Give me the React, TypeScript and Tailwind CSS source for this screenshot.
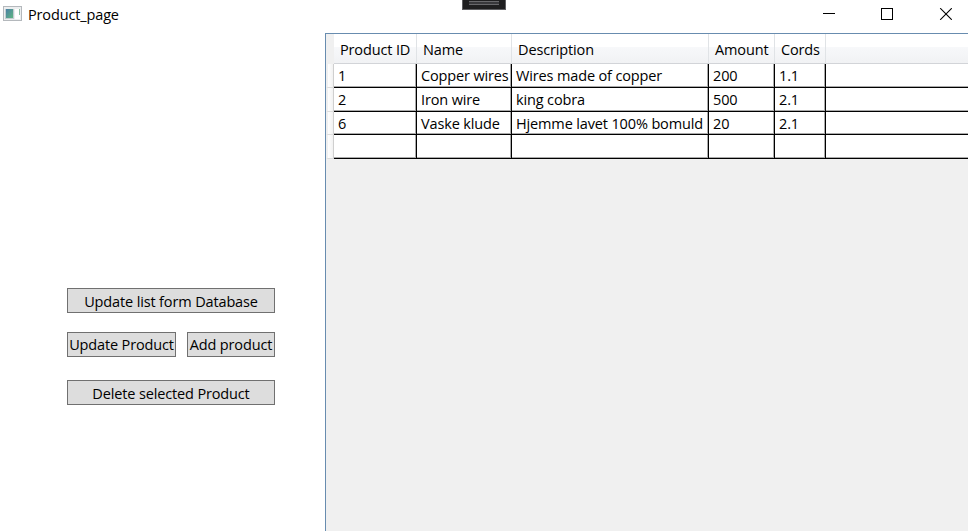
const columns = [
  { title: 'Product ID', width: 'w-[83px]' },
  { title: 'Name', width: 'w-[95px]' },
  { title: 'Description', width: 'w-[197px]' },
  { title: 'Amount', width: 'w-[66px]' },
  { title: 'Cords', width: 'w-[51px]' },
];

const rows = [
  { height: 'h-6', pad: 'pt-px', cells: ['1', 'Copper wires', 'Wires made of copper', '200', '1.1'] },
  { height: 'h-6', pad: '', cells: ['2', 'Iron wire', 'king cobra', '500', '2.1'] },
  { height: 'h-[23px]', pad: 'pt-[2px]', cells: ['6', 'Vaske klude', 'Hjemme lavet 100% bomuld', '20', '2.1'] },
  { height: 'h-6', pad: '', cells: ['', '', '', '', ''] },
];

function PushButton({ label, className }: { label: string; className: string }) {
  return (
    <button
      className={`flex h-[25px] items-center justify-center border border-[#707070] bg-[#dddddd] whitespace-nowrap ${className}`}
    >
      {label}
    </button>
  );
}

function AppIcon() {
  return (
    <svg className="mt-px" width="19" height="15" viewBox="0 0 19 15" shapeRendering="crispEdges">
      <defs>
        <linearGradient id="screen" x1="0" y1="0" x2="1" y2="1">
          <stop offset="0" stopColor="#4a7fa5" />
          <stop offset="1" stopColor="#5fb581" />
        </linearGradient>
      </defs>
      <rect x="0.5" y="0.5" width="18" height="14" fill="#eceeef" stroke="#b4b8bc" />
      <rect x="2" y="3" width="9" height="10" fill="#c3ccd0" />
      <rect x="3" y="3" width="7" height="9" fill="url(#screen)" />
      <rect x="12" y="3" width="5" height="10" fill="#ffffff" />
      <rect x="16" y="3" width="1" height="6" fill="#8fc0a6" />
    </svg>
  );
}

function TitleBar() {
  return (
    <header className="flex h-[33px] shrink-0 items-start">
      <div className="flex w-[462px] items-start pl-[3px] pt-[5px]">
        <AppIcon />
        <span className="ml-[6px] leading-5">Product_page</span>
      </div>
      <div className="h-[10px] w-11 border border-t-0 border-[#5f5f62] bg-[#1f1f20] px-[6px] pt-px">
        <div className="h-1 border-y border-[#68686b] bg-[#38383b]" />
      </div>
      <div className="flex flex-1 justify-end pr-[16px] pt-[8px]">
        <svg width="130" height="12" viewBox="0 0 130 12" fill="none" stroke="#000000">
          <path d="M1 5.5h12" shapeRendering="crispEdges" />
          <path d="M59.5 .5h11v11h-11z" shapeRendering="crispEdges" />
          <path d="M118.2 .2l11.6 11.6M129.8 .2L118.2 11.8" strokeWidth="1.1" />
        </svg>
      </div>
    </header>
  );
}

function ProductGrid() {
  return (
    <section className="flex flex-1 flex-col border-l border-t border-[#688caf] bg-[#f0f0f0]">
      <div className="flex h-[30px]">
        <div className="w-2" />
        {columns.map((c) => (
          <div
            key={c.title}
            className={`flex items-center border-r border-b border-r-[#e0e3e6] border-b-[#d2d4d8] bg-linear-to-b from-white from-45% via-[#f7f8fa] via-46% to-[#f1f2f4] pl-[6px] pt-[2px] whitespace-nowrap ${c.width}`}
          >
            {c.title}
          </div>
        ))}
        <div className="flex-1 border-b border-[#d2d4d8] bg-linear-to-b from-white from-45% via-[#f7f8fa] via-46% to-[#f1f2f4]" />
      </div>
      {rows.map((r, i) => (
        <div key={i} className={`flex ${r.height}`}>
          <div className="w-2 border-b border-l-2 border-r border-b-[#dddddd] border-l-[#f0f0f0] border-r-[#cfcfcf] bg-linear-to-r from-white to-[#f1f1f1]" />
          {r.cells.map((text, j) => (
            <div
              key={j}
              className={`flex items-center border-r border-b border-black bg-white pl-[4px] whitespace-nowrap shadow-[inset_-1px_-1px_0_#aaaaaa] ${r.pad} ${columns[j].width}`}
            >
              {text}
            </div>
          ))}
          <div className="flex-1 border-b border-black bg-white shadow-[inset_0_-1px_0_#aaaaaa]" />
        </div>
      ))}
    </section>
  );
}

export default function App() {
  return (
    <div className="flex h-[531px] w-[968px] flex-col overflow-hidden bg-white font-['Open_Sans','Noto_Sans',sans-serif] text-[14.5px] leading-5 tracking-[-0.14px] text-black">
      <TitleBar />
      <main className="flex flex-1">
        <aside className="w-[325px] pl-[67px] pt-[255px]">
          <PushButton label="Update list form Database" className="w-[208px] pt-[2px]" />
          <div className="mt-[19px] flex w-[208px] justify-between">
            <PushButton label="Update Product" className="w-[109px]" />
            <PushButton label="Add product" className="w-[88px]" />
          </div>
          <PushButton label="Delete selected Product" className="mt-[23px] w-[208px] pt-[2px]" />
        </aside>
        <ProductGrid />
      </main>
    </div>
  );
}
